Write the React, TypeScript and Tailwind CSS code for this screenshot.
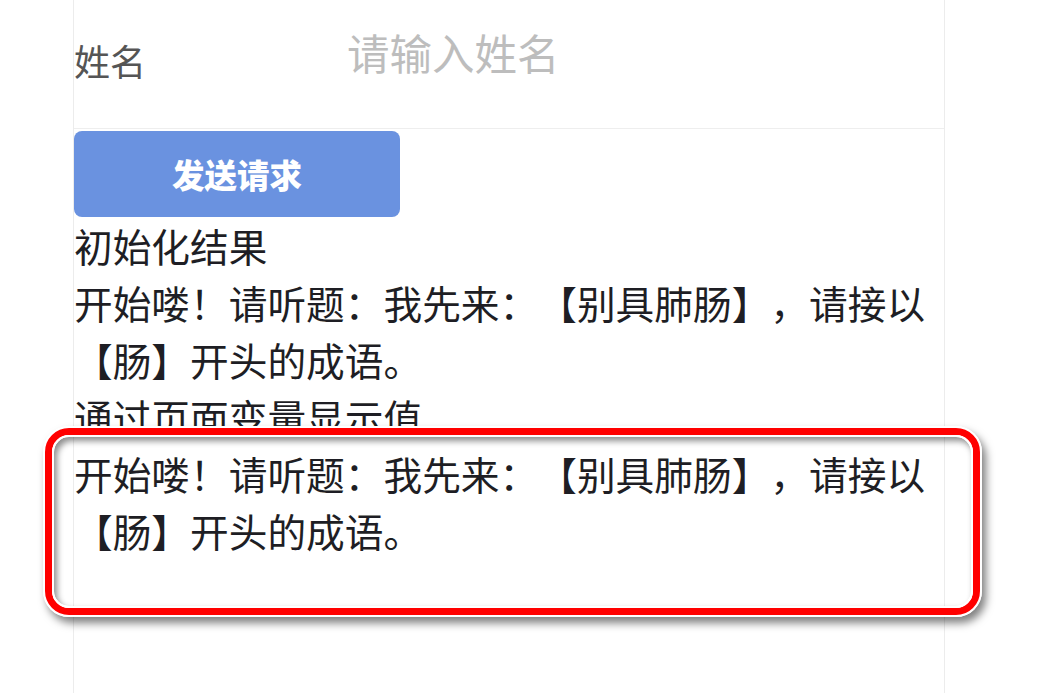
import React from "react";

const font = { fontFamily: '"Noto Sans CJK SC", "Noto Sans", sans-serif' };

const answer = "开始喽！请听题：我先来：【别具肺肠】，请接以【肠】开头的成语。";

export default function App() {
  return (
    <div className="relative w-[1051px] h-[693px] bg-white overflow-hidden [text-spacing-trim:space-all]" style={font}>
      <div className="ml-[73px] w-[872px] h-[693px] border-l border-r border-[#ececec]">
        <div className="h-[129px] border-b border-[#eeeeee] flex items-start">
          <div className="w-[273px] mt-[42px] text-[36px] leading-[36px] text-[#555555]">姓名</div>
          <input
            className="mt-[30px] w-[560px] text-[42.5px] leading-[44px] h-[44px] outline-none placeholder:text-[#bdbdbd] bg-transparent"
            placeholder="请输入姓名"
          />
        </div>
        <button className="mt-[2px] w-[326px] h-[86px] rounded-[8px] bg-[#6a92e0] text-white text-[32.5px] font-black leading-none">
          发送请求
        </button>
        <div className="w-[900px] text-[38.7px] leading-[57px] text-[#1e1e24]">
          <div>初始化结果</div>
          <div>{answer}</div>
          <div>通过页面变量显示值</div>
          <div>{answer}</div>
        </div>
      </div>

      {/* annotation box */}
      <div className="pointer-events-none absolute left-[43px] top-[426px] w-[939px] h-[191px] rounded-[26px] border-2 border-white shadow-[4px_6px_9px_rgba(0,0,0,0.5)]">
        <div className="w-full h-full rounded-[24px] border-[7px] border-[#ff0000]">
          <div className="w-full h-full rounded-[17px] border-2 border-white shadow-[inset_3px_4px_6px_rgba(0,0,0,0.45)]" />
        </div>
      </div>
    </div>
  );
}
